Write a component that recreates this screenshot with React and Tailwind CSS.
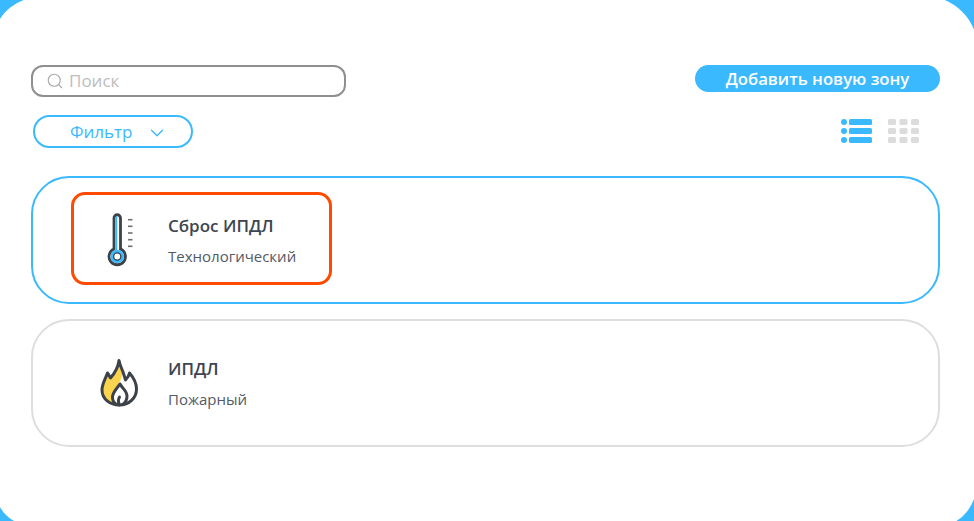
import React from 'react';
import { Search, ChevronDown } from 'lucide-react';

function ListIcon() {
  return (
    <svg width="32" height="26" viewBox="0 0 32 26" fill="#3bb9ff">
      <circle cx="3" cy="4" r="3" />
      <rect x="8" y="1" width="23" height="6" rx="1.5" />
      <circle cx="3" cy="13" r="3" />
      <rect x="8" y="10" width="23" height="6" rx="1.5" />
      <circle cx="3" cy="22" r="3" />
      <rect x="8" y="19" width="23" height="6" rx="1.5" />
    </svg>
  );
}

function GridIcon() {
  const cells = [];
  [1, 10, 19].forEach((y) => {
    [0, 11.5, 23].forEach((x) => {
      cells.push(<rect key={`${x}-${y}`} x={x} y={y} width="8" height="6" rx="1.5" />);
    });
  });
  return (
    <svg width="32" height="26" viewBox="0 0 32 26" fill="#dcdcdc">
      {cells}
    </svg>
  );
}

function ThermometerIcon() {
  return (
    <svg width="40" height="62" viewBox="0 0 40 62" className="ml-[26px] mt-[2px]">
      {/* tube and bulb outline */}
      <path
        d="M14 10 a3.250 3.250 0 0 1 6.500 0 V41 a8.200 8.200 0 1 1 -6.500 0 Z"
        fill="#fff"
        stroke="#3d4248"
        strokeWidth="2.800"
      />
      {/* mercury */}
      <path d="M15.400 10 a1.900 1.900 0 0 1 1.900 -1.900 V42 H15.400 Z" fill="#3bb9ff" />
      <circle cx="17.250" cy="48.500" r="6.800" fill="#3bb9ff" />
      <circle cx="17.250" cy="48.500" r="3.600" fill="#fff" stroke="#3d4248" strokeWidth="1.300" />
      {[11.7, 18.3, 25, 31.7, 38.3].map((y) => (
        <rect key={y} x="28" y={y - 0.8} width="4.500" height="1.600" fill="#6f7174" />
      ))}
    </svg>
  );
}

function FlameIcon() {
  return (
    <svg width="48" height="56" viewBox="0 0 48 56" className="ml-[21px] mt-[2px]">
      {/* outer flame */}
      <path
        d="M24 6.500 C25 12 27 15 28 18 C29 21 30 24 30.500 26 C32.500 24 34 21.500 34.500 19 C38 23 41.500 29 41.500 35 C41.500 44 34 51 24.500 51 C15 51 7 45 7 36 C7 30 10 26 12.500 19 C14 21 14.500 22.500 15.500 24 C19 20 23 14 24 6.500 Z"
        fill="#fff"
      />
      {/* yellow side */}
      <path
        d="M24 8 C25 13 26 16 27 19 C27.500 22 26 26 24 29 C20 33 17.500 38 17 42 C16.800 45 18 47.500 19.500 50 C12 48 8 43 8 36 C8 31 10.500 27 12.500 21 C14 23 15 25 15.500 26 C19 21 23 15 24 8 Z"
        fill="#fcd34d"
      />
      {/* inner flame */}
      <path
        d="M25 30 C27 34 32 37 32 42 C32 46 30 49 27.500 50.500 M25 30 C22 34 18 38 17.500 42.500 C17.300 46 19 49 21.500 50.500 M24.500 43 C23 45.500 23 48 24.500 51"
        fill="none"
        stroke="#3d4248"
        strokeWidth="3"
        strokeLinecap="round"
        strokeLinejoin="round"
      />
      <path
        d="M24 6.500 C25 12 27 15 28 18 C29 21 30 24 30.500 26 C32.500 24 34 21.500 34.500 19 C38 23 41.500 29 41.500 35 C41.500 44 34 51 24.500 51 C15 51 7 45 7 36 C7 30 10 26 12.500 19 C14 21 14.500 22.500 15.500 24 C19 20 23 14 24 6.500 Z"
        fill="none"
        stroke="#3d4248"
        strokeWidth="3"
        strokeLinejoin="round"
      />
    </svg>
  );
}

function ZoneCard({ active, highlighted, icon, title, subtitle }) {
  return (
    <div
      className={`h-[128px] rounded-[38px] border-2 pl-[38px] flex items-center ${
        active ? 'border-[#3bb9ff]' : 'border-[#dedede]'
      }`}
    >
      <div
        className={`w-[261px] h-[93px] mb-[4px] rounded-[14px] border-[3px] flex items-center ${
          highlighted ? 'border-[#ff4a00]' : 'border-transparent'
        }`}
      >
        <div className="w-[94px] shrink-0 flex items-center">{icon}</div>
        <div className="flex flex-col gap-[9px] mt-[4px]">
          <div className="text-[17px] leading-[23px] font-semibold text-[#3d4550]">{title}</div>
          <div className="text-[15px] leading-[20px] text-[#525a66]">{subtitle}</div>
        </div>
      </div>
    </div>
  );
}

export default function App() {
  return (
    <div className="w-[974px] h-[521px] overflow-hidden bg-[#3bb9ff] font-['Open_Sans','Noto_Sans',sans-serif]">
      {/* panel runs a little past the window so the corner arcs get cut off like in the shot */}
      <div className="h-[529px] m-[-4px] bg-white rounded-tl-[50px_38px] rounded-tr-[54px] rounded-bl-[34px] rounded-br-[36px_48px] pt-[69px] pl-[35px] pr-[38px]">
        <div className="flex items-start justify-between">
          <div className="w-[315px] h-[32px] rounded-[12px] border-2 border-[#8f8f8f] flex items-center pl-[13px] gap-[5px]">
            <Search size={18} strokeWidth={1.5} className="text-[#ababab]" />
            <span className="text-[17px] text-[#bdbdbd]">Поиск</span>
          </div>
          <button className="w-[245px] h-[27px] rounded-full bg-[#3bb9ff] text-white text-[16.7px] font-semibold flex items-center justify-center">
            Добавить новую зону
          </button>
        </div>

        <div className="flex items-center justify-between mt-[18px] mb-[28px]">
          <div className="w-[160px] h-[33px] ml-[2px] rounded-full border-2 border-[#3bb9ff] text-[#3bb9ff] flex items-center pl-[35px]">
            <span className="text-[17px]">Фильтр</span>
            <ChevronDown size={22} strokeWidth={1.5} className="ml-[13px] mt-[3px]" />
          </div>
          <div className="flex items-center gap-[15px] pr-[20px] mb-[2px]">
            <ListIcon />
            <GridIcon />
          </div>
        </div>

        <div className="flex flex-col gap-[15px]">
          <ZoneCard active highlighted icon={<ThermometerIcon />} title="Сброс ИПДЛ" subtitle="Технологический" />
          <ZoneCard icon={<FlameIcon />} title="ИПДЛ" subtitle="Пожарный" />
        </div>
      </div>
    </div>
  );
}
